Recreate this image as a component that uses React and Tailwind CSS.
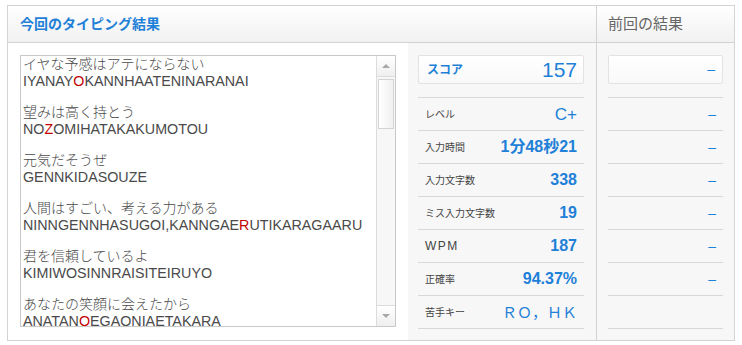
import React from "react";

const lines = [
  { jp: "イヤな予感はアテにならない", ro: ["IYANAY", "O", "KANNHAATENINARANAI"] },
  { jp: "望みは高く持とう", ro: ["NO", "Z", "OMIHATAKAKUMOTOU"] },
  { jp: "元気だそうぜ", ro: ["GENNKIDASOUZE"] },
  { jp: "人間はすごい、考える力がある", ro: ["NINNGENNHASUGOI,KANNGAE", "R", "UTIKARAGAARU"] },
  { jp: "君を信頼しているよ", ro: ["KIMIWOSINNRAISITEIRUYO"] },
  { jp: "あなたの笑顔に会えたから", ro: ["ANATAN", "O", "EGAONIAETAKARA"] },
];

const stats = [
  ["レベル", "C+", "text-[17px] font-normal"],
  ["入力時間", "1分48秒21", "text-[16px] font-bold"],
  ["入力文字数", "338", "text-[16px] font-bold"],
  ["ミス入力文字数", "19", "text-[16px] font-bold"],
  ["WPM", "187", "text-[16px] font-bold"],
  ["正確率", "94.37%", "text-[16px] font-bold"],
  ["苦手キー", "ＲＯ，ＨＫ", "text-[15px] font-normal"],
];

const font = { fontFamily: '"Liberation Sans", "Noto Sans CJK JP", sans-serif' };
const jpFont = { fontFamily: '"Noto Sans CJK JP", sans-serif' };

export default function App() {
  return (
    <div className="w-[742px] h-[345px] bg-white pt-[5px] pl-[7px]" style={font}>
      <div className="w-[728px] h-[336px] border border-[#d3d3d3] flex">
        {/* left */}
        <div className="w-[589px] border-r border-[#d3d3d3] flex flex-col">
          <div className="h-[37px] border-b border-[#d3d3d3] bg-gradient-to-b from-white to-[#f1f1f1] flex items-center pl-[12px]">
            <span className="text-[14px] font-bold text-[#1f80d8]">今回のタイピング結果</span>
          </div>
          <div className="flex-1 flex">
            <div className="w-[400px] bg-white pl-[12px] pt-[12px]">
              <div className="w-[376px] h-[272px] border border-[#c9c9c9] flex overflow-hidden">
                <div className="flex-1 overflow-hidden pl-[2px] text-[#4a4a4a]">
                  <div className="mt-[-3px]">
                    {lines.map((l, i) => (
                      <div key={i} className="mb-[11px]">
                        <div className="text-[14px] leading-[20px] h-[20px] font-light" style={jpFont}>{l.jp}</div>
                        <div className="text-[14.3px] leading-[17px] h-[17px]">
                          {l.ro.map((s, j) =>
                            j === 1 ? (
                              <span key={j} className="text-[#c40000]">{s}</span>
                            ) : (
                              <span key={j}>{s}</span>
                            )
                          )}
                        </div>
                      </div>
                    ))}
                  </div>
                </div>
                <div className="w-[19px] border-l border-[#dcdcdc] bg-[#f7f7f7] flex flex-col">
                  <div className="h-[21px] border-b border-[#dcdcdc] bg-gradient-to-b from-white to-[#efefef] flex items-center justify-center">
                    <div className="w-0 h-0 border-l-[4px] border-r-[4px] border-b-[4px] border-l-transparent border-r-transparent border-b-[#a8a8a8]" />
                  </div>
                  <div className="h-[50px] mx-[1px] mt-[2px] border border-[#d4d4d4] bg-gradient-to-r from-white to-[#f0f0f0]" />
                  <div className="flex-1" />
                  <div className="h-[21px] border-t border-[#dcdcdc] bg-gradient-to-b from-white to-[#efefef] flex items-center justify-center">
                    <div className="w-0 h-0 border-l-[4px] border-r-[4px] border-t-[4px] border-l-transparent border-r-transparent border-t-[#a8a8a8]" />
                  </div>
                </div>
              </div>
            </div>
            <div className="flex-1 bg-[#f7f7f7] pl-[10px] pr-[12px] pt-[12px]">
              <div className="h-[29px] rounded-[2px] border border-[#e3e3e3] bg-gradient-to-b from-white to-[#f9f9f9] flex items-center justify-between pl-[8px] pr-[6px]">
                <span className="text-[12px] font-bold text-[#1f80d8]">スコア</span>
                <span className="text-[21px] text-[#1f80d8] leading-none">157</span>
              </div>
              <div className="mt-[13px] border-b border-[#d8d8d8]">
                {stats.map(([label, value, cls], i) => (
                  <div key={i} className="h-[33px] border-t border-[#d8d8d8] flex items-center justify-between pl-[7px] pr-[7px]">
                    {label === "WPM" ? (
                      <span className="text-[12px] tracking-[1.5px] text-[#444]">{label}</span>
                    ) : (
                      <span className="text-[10px] text-[#444]">{label}</span>
                    )}
                    <span className={`${cls} text-[#1f80d8] leading-none`}>{value}</span>
                  </div>
                ))}
              </div>
            </div>
          </div>
        </div>
        {/* right */}
        <div className="flex-1 bg-[#f7f7f7] flex flex-col">
          <div className="h-[37px] border-b border-[#d3d3d3] bg-gradient-to-b from-white to-[#f1f1f1] flex items-center pl-[11px]">
            <span className="text-[15px] text-[#666]">前回の結果</span>
          </div>
          <div className="pl-[11px] pr-[11px] pt-[12px]">
            <div className="h-[29px] rounded-[2px] border border-[#e3e3e3] bg-gradient-to-b from-white to-[#f9f9f9] flex items-center justify-end pr-[7px]">
              <span className="text-[14px] text-[#1f80d8]">–</span>
            </div>
            <div className="mt-[13px] border-b border-[#d8d8d8]">
              {stats.map(([label], i) => (
                <div key={i} className="h-[33px] border-t border-[#d8d8d8] flex items-center justify-end pr-[7px]">
                  {i < 6 && <span className="text-[14px] text-[#1f80d8]">–</span>}
                </div>
              ))}
            </div>
          </div>
        </div>
      </div>
    </div>
  );
}
